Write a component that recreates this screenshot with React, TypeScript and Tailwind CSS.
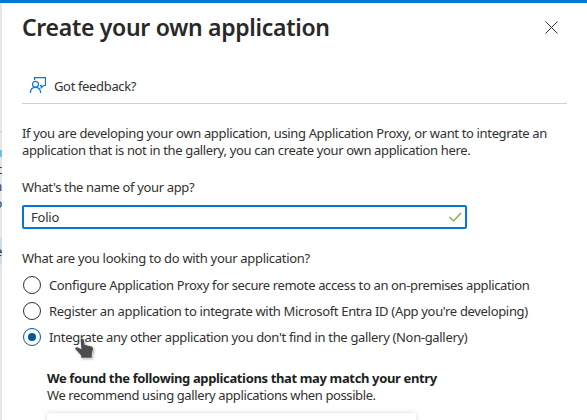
import { useState } from 'react';

const options = [
  { id: 'proxy', label: 'Configure Application Proxy for secure remote access to an on-premises application', tracking: 'tracking-[-0.36px]' },
  { id: 'register', label: "Register an application to integrate with Microsoft Entra ID (App you're developing)", tracking: 'tracking-[-0.325px]' },
  { id: 'gallery', label: "Integrate any other application you don't find in the gallery (Non-gallery)", tracking: 'tracking-[-0.33px]' },
];

function FeedbackIcon() {
  return (
    <svg width="18" height="18" viewBox="0 0 18 18" fill="none" stroke="#0078d4" strokeWidth="1.2">
      <path d="M6.5 3V.6H17.5V8.5H15.5L13.2 10.8V8.5H12" />
      <circle cx="7.5" cy="7.3" r="3" />
      <path d="M2.4 16C2.5 12.6 4.6 10.4 7.5 10.4S12.5 12.6 12.7 16" />
    </svg>
  );
}

function HandCursor() {
  return (
    <svg width="21" height="24" viewBox="0 0 21 24" className="drop-shadow-[1px_1px_1px_rgba(0,0,0,0.3)]">
      <path
        d="M5.6 2.2C5.6.4 8.6.4 8.9 2.2L9.6 6.8L16.3 8.5C17.6 8.9 18.1 9.8 18 11L16.8 16.5V19.7H6.2V17.5L.6 11.2C-.3 10 1 8.8 2.4 9.3L6.4 11.2Z"
        fill="#4d4d4d" stroke="#fff" strokeWidth="1" paintOrder="stroke"
      />
    </svg>
  );
}

export default function App() {
  const [name, setName] = useState('Folio');
  const [selected, setSelected] = useState('gallery');

  return (
    <div className="flex h-[420px] w-[587px] flex-col overflow-hidden bg-white font-['Noto_Sans',sans-serif] text-[13px] leading-[17px] tracking-[-0.35px] text-[#323130]">
      {/* Portal bar */}
      <div className="h-[3px] shrink-0 bg-[#0078d4]" />
      <div className="flex flex-1">
        {/* Edge of the page behind the panel */}
        <div className="flex w-[2px] shrink-0 flex-col overflow-hidden bg-[#e6e6e6]">
          <div className="mt-[128px] h-px shrink-0 bg-[#c8c8c8]" />
          <div className="mt-[18px] h-[7px] shrink-0 bg-[#71bde8]" />
          <div className="mt-[4px] flex h-[17px] shrink-0 justify-end text-[#323130]">c</div>
          <div className="flex h-[17px] shrink-0 justify-end text-[#323185]">h</div>
          <div className="flex h-[17px] shrink-0 justify-end text-[#25426f]">o</div>
          <div className="mt-[26px] flex h-[26px] shrink-0 items-center justify-end bg-[#cbdbe7]">e</div>
        </div>

        <main className="min-w-0 flex-1 px-5">
          <header className="flex h-[48px] items-center justify-between pr-[9px]">
            <h1 className="text-[23px] font-semibold leading-[30px] tracking-[-0.3px] text-[#292827]">Create your own application</h1>
            <svg width="13" height="13" viewBox="0 0 13 13" stroke="#323130" strokeWidth="1">
              <path d="M.5.5l12 12M12.5.5l-12 12" />
            </svg>
          </header>

          <div className="mt-[18px] flex h-[35px] items-center gap-2 border-b border-[#d0d0d0] pl-[6px]">
            <FeedbackIcon />
            <span>Got feedback?</span>
          </div>

          <p className="mt-[21px] whitespace-nowrap">
            If you are developing your own application, using Application Proxy, or want to integrate an
            <br />
            application that is not in the gallery, you can create your own application here.
          </p>

          <label className="mt-[20px] block" htmlFor="app-name">What's the name of your app?</label>
          <div className="mt-[9px] flex h-6 w-[445px] items-center justify-between rounded-[2px] border-2 border-[#0078d4] pl-[7px] pr-[3px]">
            <input id="app-name" value={name} onChange={e => setName(e.target.value)} className="flex-1 tracking-[-0.2px] outline-none" />
            <svg width="14" height="10" viewBox="0 0 14 10" fill="none" stroke="#6bb02c" strokeWidth="1.2">
              <path d="M1.5 5l4 4 7.5-8" />
            </svg>
          </div>

          <p className="mt-[21px] tracking-[-0.3px]">What are you looking to do with your application?</p>
          <div className="mt-[9px] flex flex-col gap-2">
            {options.map(o => (
              <button key={o.id} onClick={() => setSelected(o.id)} className="flex h-[18px] items-center gap-2 whitespace-nowrap pl-px text-left">
                <span className={`flex size-[18px] shrink-0 items-center justify-center rounded-full border ${selected === o.id ? 'border-[#005a9e]' : 'border-[#323130]'}`}>
                  {selected === o.id && <span className="size-2 rounded-full bg-[#005a9e]" />}
                </span>
                <span className={o.tracking}>{o.label}</span>
              </button>
            ))}
          </div>

          {/* Suggestions */}
          <section className="mt-[24px] whitespace-nowrap pl-[25px]">
            <h2 className="font-bold tracking-[-0.36px] text-[#201f1e]">We found the following applications that may match your entry</h2>
            <p className="tracking-[-0.39px]">We recommend using gallery applications when possible.</p>
            <div className="mt-[9px] h-[40px] w-[369px] bg-white shadow-[0_0_5px_rgba(0,0,0,0.15)]" />
          </section>
        </main>
      </div>
      <div className="pointer-events-none absolute left-[75px] top-[338px]">
        <HandCursor />
      </div>
    </div>
  );
}
